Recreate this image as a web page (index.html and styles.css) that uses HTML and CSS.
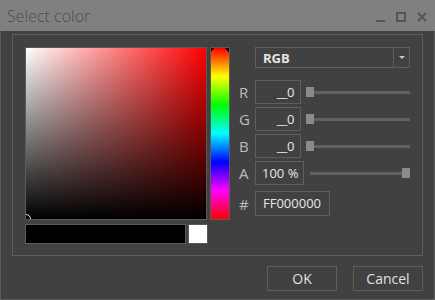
FILE: index.html
```html
<!DOCTYPE html>
<html>
<head>
	<meta charset="utf-8">
	<title>Select color</title>
	<link rel="stylesheet" href="styles.css">
</head>
<body>
	<div class="window">
		<div class="titlebar">
			<span class="title">Select color</span>
			<div class="controls">
				<span class="ctl min"></span>
				<span class="ctl max"></span>
				<svg class="ctl close" width="10" height="10" viewBox="0 0 10 10">
					<path d="M1 1 L9 9 M9 1 L1 9" stroke="#555" stroke-width="2" fill="none"/>
				</svg>
			</div>
		</div>

		<div class="content">
			<div class="group">
				<div class="left">
					<div class="pickers">
						<div class="sv"><span class="sv-cursor"></span></div>
						<div class="hue"><span class="hue-mark"></span></div>
					</div>
					<div class="preview">
						<div class="swatch-new"></div>
						<div class="swatch-old"></div>
					</div>
				</div>

				<div class="fields">
					<div class="combo">
						<span class="combo-text">RGB</span>
						<span class="combo-arrow"></span>
					</div>

					<div class="row">
						<span class="lbl">R</span>
						<div class="box num">__0</div>
						<div class="slider"><span class="thumb"></span></div>
					</div>
					<div class="row">
						<span class="lbl">G</span>
						<div class="box num">__0</div>
						<div class="slider"><span class="thumb"></span></div>
					</div>
					<div class="row">
						<span class="lbl">B</span>
						<div class="box num">__0</div>
						<div class="slider"><span class="thumb"></span></div>
					</div>
					<div class="row">
						<span class="lbl">A</span>
						<div class="box pct">100 %</div>
						<div class="slider slider-a"><span class="thumb"></span></div>
					</div>
					<div class="row row-hex">
						<span class="lbl">#</span>
						<div class="box hex">FF000000</div>
					</div>
				</div>
			</div>

			<div class="buttons">
				<div class="btn">OK</div>
				<div class="btn">Cancel</div>
			</div>
		</div>
	</div>
</body>
</html>
```

FILE: styles.css
```css
html, body {
	margin: 0;
	width: 435px;
	height: 300px;
	overflow: hidden;
	background: #414141;
	font-family: "Open Sans", "Noto Sans", sans-serif;
}
.window {
	width: 435px;
	height: 300px;
	box-sizing: border-box;
	border: 1px solid #5c5c5c;
	border-top: none;
	background: #414141;
}
.titlebar {
	height: 31px;
	margin: 0 -1px;
	background: #808080;
	display: flex;
	align-items: center;
	justify-content: space-between;
	padding: 0 8px 0 7px;
}
.title {
	font-family: "Open Sans", sans-serif;
	font-weight: 300;
	font-size: 16px;
	color: #4e4e4e;
	margin-top: 1px;
}
.controls {
	display: flex;
	align-items: center;
	gap: 11px;
	margin-top: 2px;
}
.ctl.min {
	width: 9px;
	height: 2px;
	background: #555;
	margin-top: 8px;
}
.ctl.max {
	width: 6px;
	height: 6px;
	border: 2px solid #555;
}

.content {
	padding: 3px 11px 0 11px;
}
.group {
	height: 222px;
	box-sizing: border-box;
	border: 1px solid #5e5e5e;
	padding: 12px;
	display: flex;
	gap: 10px;
}
.pickers {
	display: flex;
	gap: 3px;
}
.sv {
	position: relative;
	width: 182px;
	height: 173px;
	box-sizing: border-box;
	border: 1px solid #5a5a5a;
	overflow: hidden;
	background:
		linear-gradient(to top, #000, rgba(0, 0, 0, 0)),
		linear-gradient(to right, #fff, #f00);
}
.sv-cursor {
	position: absolute;
	left: -5px;
	bottom: -5px;
	width: 8px;
	height: 8px;
	border: 1px solid #eee;
	border-radius: 50%;
}
.hue {
	position: relative;
	width: 20px;
	height: 173px;
	box-sizing: border-box;
	border: 1px solid #5a5a5a;
	overflow: hidden;
	background: linear-gradient(to bottom, #f00, #ff0, #0f0, #0ff, #00f, #f0f, #f00);
}
.hue-mark {
	position: absolute;
	left: 0;
	right: 0;
	top: 0;
	height: 4px;
	background:
		linear-gradient(135deg, #000 50%, transparent 50%) left top / 4px 4px no-repeat,
		linear-gradient(225deg, #000 50%, transparent 50%) right top / 4px 4px no-repeat;
}
.preview {
	display: flex;
	gap: 1px;
	margin-top: 4px;
}
.swatch-new {
	width: 161px;
	height: 20px;
	box-sizing: border-box;
	border: 1px solid #5a5a5a;
	background: #000;
}
.swatch-old {
	width: 20px;
	height: 20px;
	box-sizing: border-box;
	border: 1px solid #5a5a5a;
	background: #fff;
	margin-left: 1px;
}

.fields {
	width: 170px;
	display: flex;
	flex-direction: column;
	gap: 3px;
}
.combo {
	margin-left: 15px;
	height: 21px;
	box-sizing: border-box;
	border: 1px solid #5e5e5e;
	display: flex;
	align-items: center;
	margin-bottom: 9px;
}
.combo-text {
	flex: 1;
	padding-left: 7px;
	font-size: 13px;
	font-weight: bold;
	color: #e6e6e6;
}
.combo-arrow {
	width: 15px;
	height: 19px;
	border-left: 1px solid #5e5e5e;
	position: relative;
}
.combo-arrow::after {
	content: "";
	position: absolute;
	left: 5px;
	top: 8px;
	border-left: 3px solid transparent;
	border-right: 3px solid transparent;
	border-top: 3px solid #c8c8c8;
}
.row {
	display: flex;
	align-items: center;
	height: 24px;
}
.row-hex {
	margin-top: 3px;
	height: 25px;
}
.lbl {
	width: 15px;
	font-size: 15px;
	color: #bdbdbd;
	margin-left: -1px;
	margin-right: 1px;
}
.box {
	height: 24px;
	box-sizing: border-box;
	border: 1px solid #5e5e5e;
	font-size: 13px;
	color: #e8e8e8;
	line-height: 22px;
}
.num {
	width: 46px;
	text-align: right;
	padding-right: 6px;
	letter-spacing: -0.5px;
}
.pct {
	width: 49px;
	padding-left: 6px;
}
.hex {
	width: 75px;
	height: 25px;
	padding-left: 7px;
}
.slider {
	flex: 1;
	height: 10px;
	margin-left: 5px;
	display: flex;
	align-items: center;
	background: linear-gradient(#626262, #626262) center / 100% 3px no-repeat;
}
.slider-a {
	margin-left: 6px;
	justify-content: flex-end;
}
.thumb {
	width: 8px;
	height: 10px;
	background: #8a8a8a;
}

.buttons {
	display: flex;
	justify-content: flex-end;
	gap: 16px;
	margin-top: 10px;
}
.btn {
	width: 70px;
	height: 25px;
	box-sizing: border-box;
	border: 1px solid #5e5e5e;
	color: #e0e0e0;
	font-size: 14px;
	text-align: center;
	line-height: 23px;
}
```
